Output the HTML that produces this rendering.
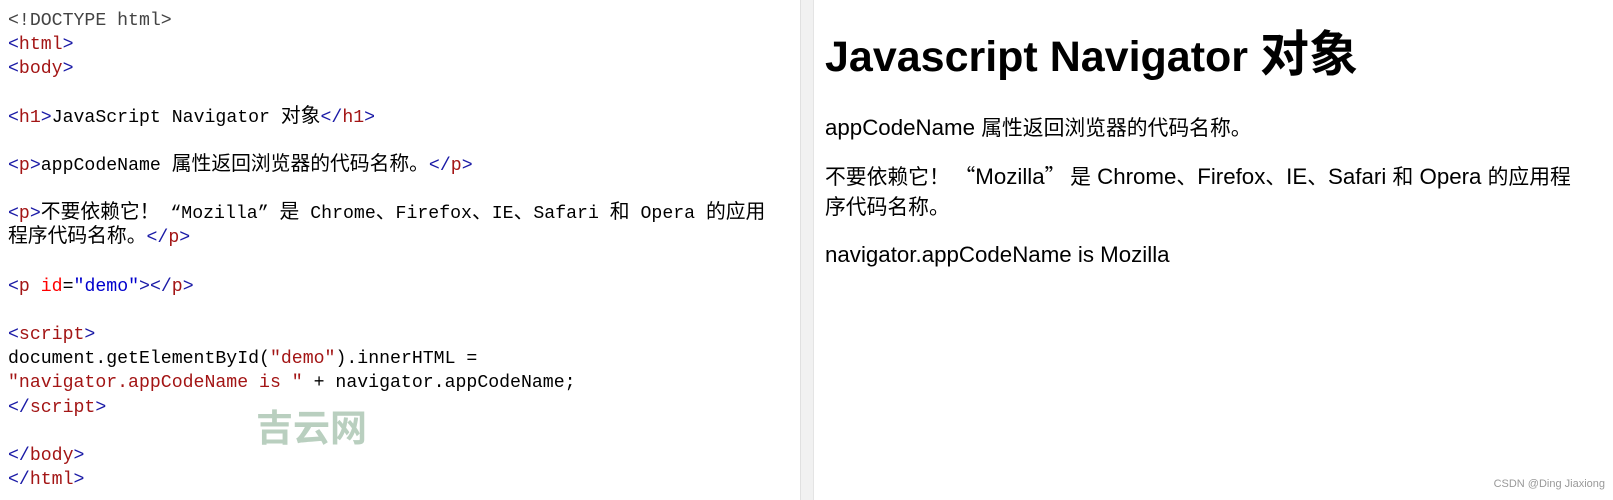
<!DOCTYPE html>
<html><head><meta charset="utf-8"><style>
body{margin:0;width:1613px;height:500px;background:#fff;overflow:hidden;position:relative}
#code{position:absolute;left:8px;top:9px;font:18.2px/24.15px "Liberation Mono","Noto Sans CJK SC",monospace;color:#000;white-space:pre}
.c{font-family:"Noto Sans CJK SC",sans-serif;line-height:0}
#code .c{font-size:19.8px}
.b{color:#1a1aa6}.t{color:#a31515}.a{color:#f00}.s{color:#a31515}.v{color:#0000cd}.d{color:#444}
#div{position:absolute;left:800px;top:0;width:12px;height:500px;background:#f1f1f1;border-left:1px solid #e0e0e0;border-right:1px solid #e4e4e4}
#out{position:absolute;left:825px;top:0;font-family:"Liberation Sans","Noto Sans CJK SC",sans-serif;color:#000}
h1{font-size:43px;font-weight:bold;margin:30px 0 0;line-height:54px;white-space:nowrap}
h1 .c{font-size:49px}
p{font-size:22.3px;line-height:30px;margin:19px 0 0;width:790px;white-space:nowrap}
p .c{font-size:20.8px}
#wm{position:absolute;left:256px;top:400px;font:bold 37px "Noto Sans CJK SC",sans-serif;color:#b9cfbf;line-height:50px}
#csdn{position:absolute;right:8px;top:478px;font:11px "Liberation Sans",sans-serif;color:#999}
</style></head><body>
<div id="code"><span class="d">&lt;!DOCTYPE html&gt;</span>
<span class="b">&lt;</span><span class="t">html</span><span class="b">&gt;</span>
<span class="b">&lt;</span><span class="t">body</span><span class="b">&gt;</span>

<span class="b">&lt;</span><span class="t">h1</span><span class="b">&gt;</span>JavaScript Navigator <span class="c">对象</span><span class="b">&lt;/</span><span class="t">h1</span><span class="b">&gt;</span>

<span class="b">&lt;</span><span class="t">p</span><span class="b">&gt;</span>appCodeName <span class="c">属性返回浏览器的代码名称。</span><span class="b">&lt;/</span><span class="t">p</span><span class="b">&gt;</span>

<span class="b">&lt;</span><span class="t">p</span><span class="b">&gt;</span><span class="c">不要依赖它！</span> “Mozilla” <span class="c">是</span> Chrome<span class="c">、</span>Firefox<span class="c">、</span>IE<span class="c">、</span>Safari <span class="c">和</span> Opera <span class="c">的应用</span>
<span class="c">程序代码名称。</span><span class="b">&lt;/</span><span class="t">p</span><span class="b">&gt;</span>

<span class="b">&lt;</span><span class="t">p</span> <span class="a">id</span>=<span class="v">"demo"</span><span class="b">&gt;&lt;/</span><span class="t">p</span><span class="b">&gt;</span>

<span class="b">&lt;</span><span class="t">script</span><span class="b">&gt;</span>
document.getElementById(<span class="s">"demo"</span>).innerHTML =
<span class="s">"navigator.appCodeName is "</span> + navigator.appCodeName;
<span class="b">&lt;/</span><span class="t">script</span><span class="b">&gt;</span>

<span class="b">&lt;/</span><span class="t">body</span><span class="b">&gt;</span>
<span class="b">&lt;/</span><span class="t">html</span><span class="b">&gt;</span></div>
<div id="wm">吉云网</div>
<div id="div"></div>
<div id="out">
<h1>Javascript Navigator <span class="c">对象</span></h1>
<p style="margin-top:29px">appCodeName <span class="c">属性返回浏览器的代码名称。</span></p>
<p><span class="c">不要依赖它！ “</span>Mozilla<span class="c">” 是</span> Chrome<span class="c">、</span>Firefox<span class="c">、</span>IE<span class="c">、</span>Safari <span class="c">和</span> Opera <span class="c">的应用程</span><br><span class="c">序代码名称。</span></p>
<p style="margin-top:18px">navigator.appCodeName is Mozilla</p>
</div>
<div id="csdn">CSDN @Ding Jiaxiong</div>
</body></html>
